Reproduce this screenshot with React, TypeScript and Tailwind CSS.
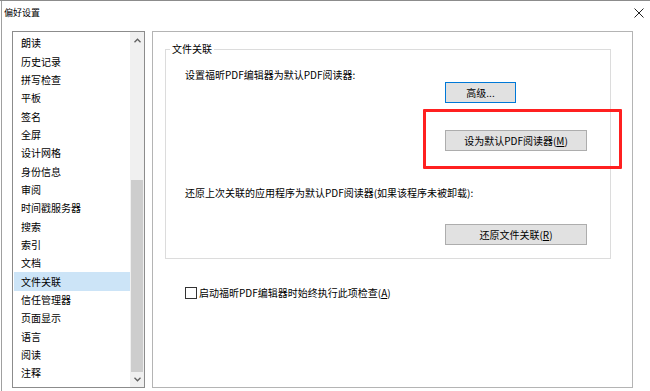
const items = [
  '朗读',
  '历史记录',
  '拼写检查',
  '平板',
  '签名',
  '全屏',
  '设计网格',
  '身份信息',
  '审阅',
  '时间戳服务器',
  '搜索',
  '索引',
  '文档',
  '文件关联',
  '信任管理器',
  '页面显示',
  '语言',
  '阅读',
  '注释',
];

const font = { fontFamily: '"Noto Sans CJK SC", "Noto Sans", sans-serif' };

function Chevron({ up }: { up?: boolean }) {
  return (
    <svg width="7" height="5" viewBox="0 0 7 5" className="text-[#606060]">
      <path
        d={up ? 'M0.5 4.2 L3.5 1.2 L6.5 4.2' : 'M0.5 0.8 L3.5 3.8 L6.5 0.8'}
        fill="none"
        stroke="currentColor"
        strokeWidth="1.3"
      />
    </svg>
  );
}

function Button({ label, hotkey, width, focused }: { label: string; hotkey?: string; width: string; focused?: boolean }) {
  return (
    <div
      className={`${width} h-[21px] flex items-center justify-center bg-[#e1e1e1] border ${
        focused ? 'border-[#0078d7]' : 'border-[#adadad]'
      }`}
    >
      <span>
        {label}
        {hotkey && (
          <>
            (<span className="underline underline-offset-1">{hotkey}</span>)
          </>
        )}
      </span>
    </div>
  );
}

export default function App() {
  return (
    <div
      className="w-[650px] h-[391px] bg-white border-t border-[#8c8c8c] overflow-hidden text-[10px] leading-[12px] text-black"
      style={font}
    >
      <div className="ml-[1px] h-full border-l border-[#a0a0a0] flex flex-col">
        {/* title bar */}
        <div className="h-[24px] flex items-center justify-between pl-[2px] pr-[6px]">
          <span className="text-[9px]">偏好设置</span>
          <svg width="10" height="10" viewBox="0 0 10 10">
            <path d="M0.5 0.5 L9.5 9.5 M9.5 0.5 L0.5 9.5" stroke="#222" strokeWidth="1" />
          </svg>
        </div>

        <div className="flex gap-[7px] pl-[10px] pt-[6px]">
          {/* category list */}
          <div className="w-[133px] h-[357px] border border-[#8c8c8c] flex">
            <div className="flex-1 pl-[1px] pt-[2px]">
              {items.map((it) => (
                <div
                  key={it}
                  className={`h-[18.35px] flex items-center pl-[7px] ${it === '文件关联' ? 'bg-[#cce4f7]' : ''}`}
                >
                  {it}
                </div>
              ))}
            </div>
            <div className="w-[14px] bg-[#f0f0f0] flex flex-col">
              <div className="h-[17px] flex items-center justify-center">
                <Chevron up />
              </div>
              <div className="flex-1 flex flex-col justify-end">
                <div className="h-[192px] mx-[1px] bg-[#cdcdcd]" />
              </div>
              <div className="h-[15px] flex items-center justify-center">
                <Chevron />
              </div>
            </div>
          </div>

          {/* settings panel */}
          <div className="relative w-[481px] h-[357px] border border-[#b4b4b4] pl-[12px] pt-[11px]">
            <fieldset className="w-[446px] border border-[#dcdcdc] px-0 pb-[13px] m-0">
              <legend className="ml-[4px] px-[2px]">文件关联</legend>
              <div className="pl-[19px] flex flex-col">
                <div className="mt-[14px]">设置福昕PDF编辑器为默认PDF阅读器:</div>
                <div className="mt-[1px] pl-[260px]">
                  <Button label="高级..." width="w-[71px]" focused />
                </div>
                <div className="mt-[27px] pl-[260px]">
                  <Button label="设为默认PDF阅读器" hotkey="M" width="w-[142px]" />
                </div>
                <div className="mt-[36px]">还原上次关联的应用程序为默认PDF阅读器(如果该程序未被卸载):</div>
                <div className="mt-[25px] pl-[260px]">
                  <Button label="还原文件关联" hotkey="R" width="w-[142px]" />
                </div>
              </div>
            </fieldset>

            <div className="mt-[28px] pl-[20px] flex items-center gap-[2px]">
              <div className="w-[12px] h-[12px] border border-[#333] bg-white" />
              <span>
                启动福昕PDF编辑器时始终执行此项检查(<span className="underline underline-offset-1">A</span>)
              </span>
            </div>

            {/* red annotation box */}
            <div className="absolute left-[270px] top-[77px] w-[199px] h-[60px] border-[3px] border-[#ff2020] rounded-[1px]" />
          </div>
        </div>
      </div>
    </div>
  );
}
